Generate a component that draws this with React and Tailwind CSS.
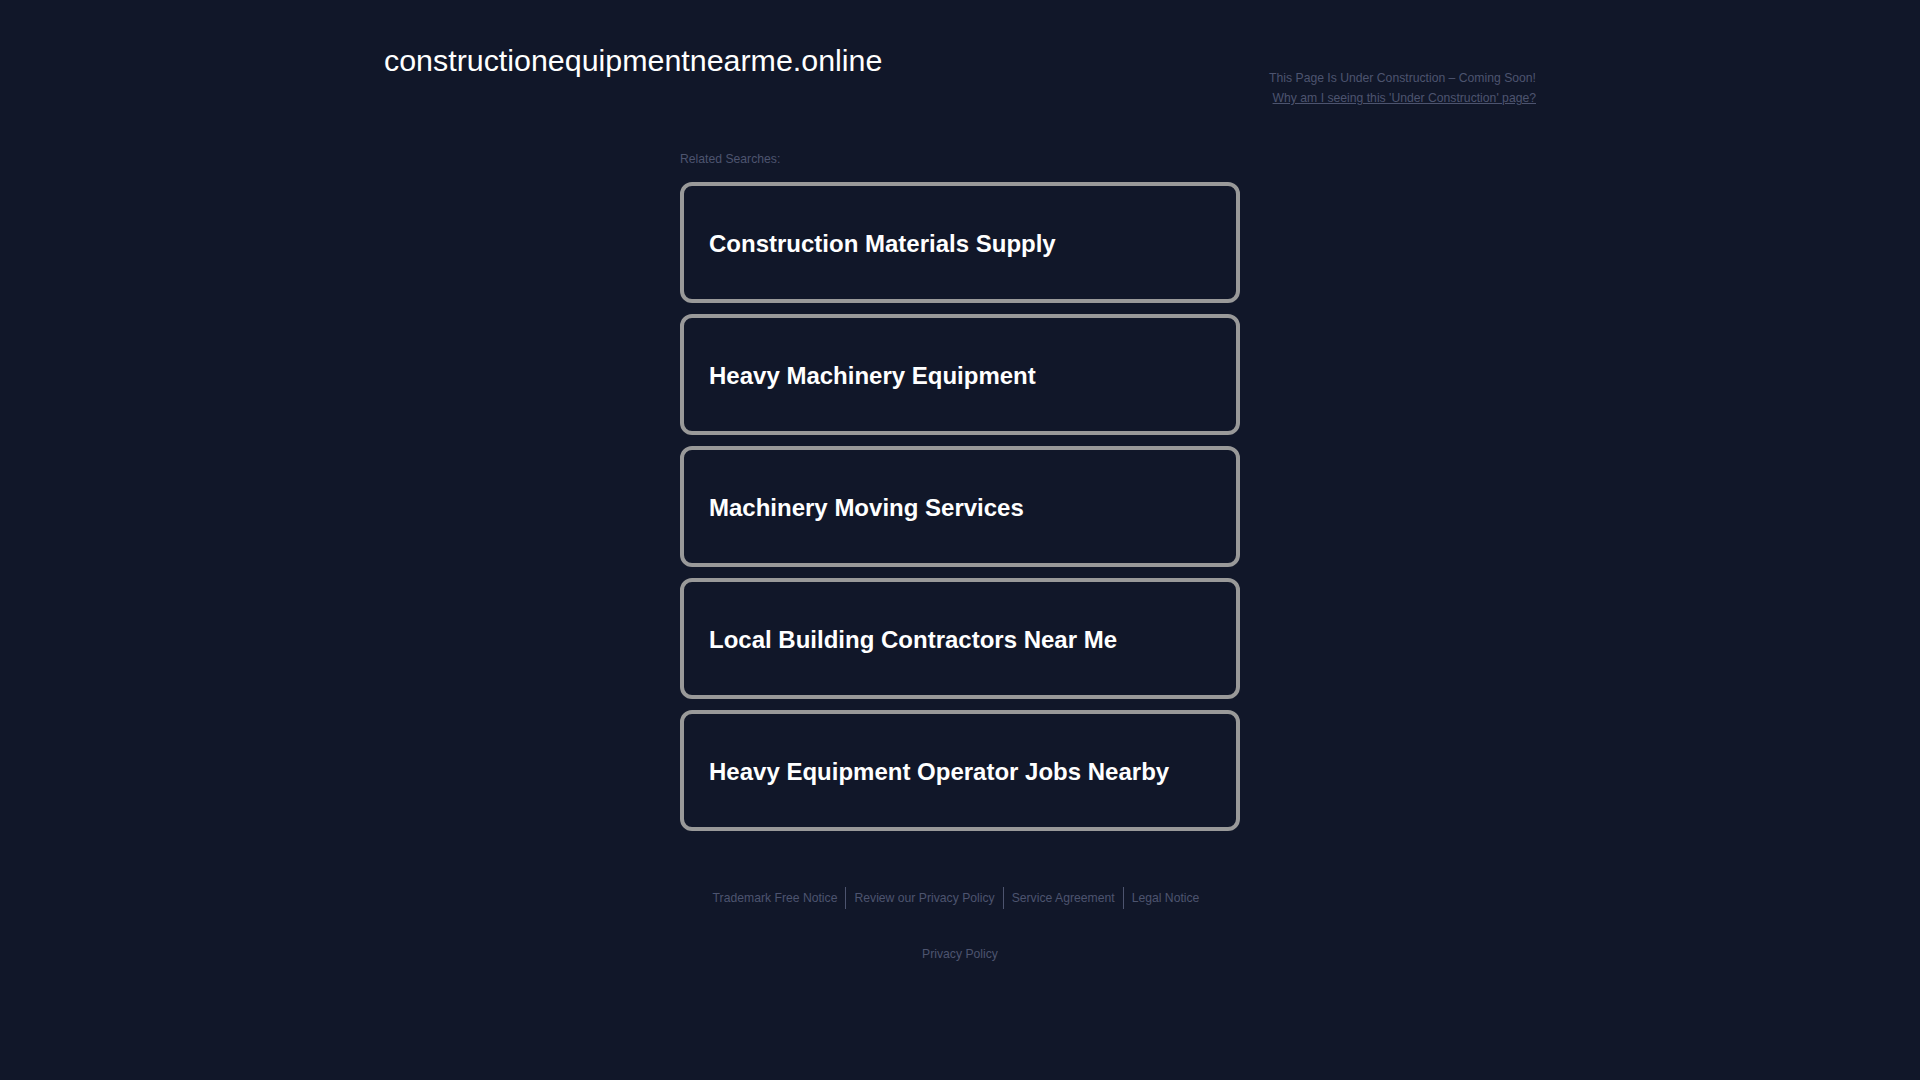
import React from 'react';

const SEARCHES = [
  'Construction Materials Supply',
  'Heavy Machinery Equipment',
  'Machinery Moving Services',
  'Local Building Contractors Near Me',
  'Heavy Equipment Operator Jobs Nearby',
];

const FOOTER_LINKS = [
  'Trademark Free Notice',
  'Review our Privacy Policy',
  'Service Agreement',
  'Legal Notice',
];

export default function App() {
  return (
    <div className="min-h-screen w-full bg-[#111729] font-['Liberation_Sans',Arial,sans-serif] text-[#4d546f]">
      <header className="mx-auto flex w-[1152px] items-start justify-between pt-[42px]">
        <h1 className="text-[30.4px] leading-[36px] font-normal text-white">
          constructionequipmentnearme.online
        </h1>
        <div className="mt-[26px] text-right text-[12.2px] leading-[20px]">
          <p>This Page Is Under Construction – Coming Soon!</p>
          <a href="#" className="underline">
            Why am I seeing this 'Under Construction' page?
          </a>
        </div>
      </header>

      <main className="mx-auto w-[560px]">
        <p className="mt-[43px] text-[12.2px] leading-4">Related Searches:</p>
        <div className="mt-[15px] flex flex-col gap-[11px]">
          {SEARCHES.map((s) => (
            <a
              key={s}
              href="#"
              className="flex h-[121px] items-center rounded-[12px] border-4 border-[#999999] pt-[2px] pl-[25px] text-[24px] leading-[28px] font-bold text-white"
            >
              {s}
            </a>
          ))}
        </div>
      </main>

      <footer className="text-[12.2px] leading-4">
        <div className="mt-[56px] flex justify-center pr-2">
          {FOOTER_LINKS.map((l, i) => (
            <a
              key={l}
              href="#"
              className={
                'flex h-[22px] items-center px-2 ' +
                (i > 0 ? 'border-l border-[#4d546f]' : '')
              }
            >
              {l}
            </a>
          ))}
        </div>
        <div className="mt-[37px] text-center">
          <a href="#">Privacy Policy</a>
        </div>
      </footer>
    </div>
  );
}
